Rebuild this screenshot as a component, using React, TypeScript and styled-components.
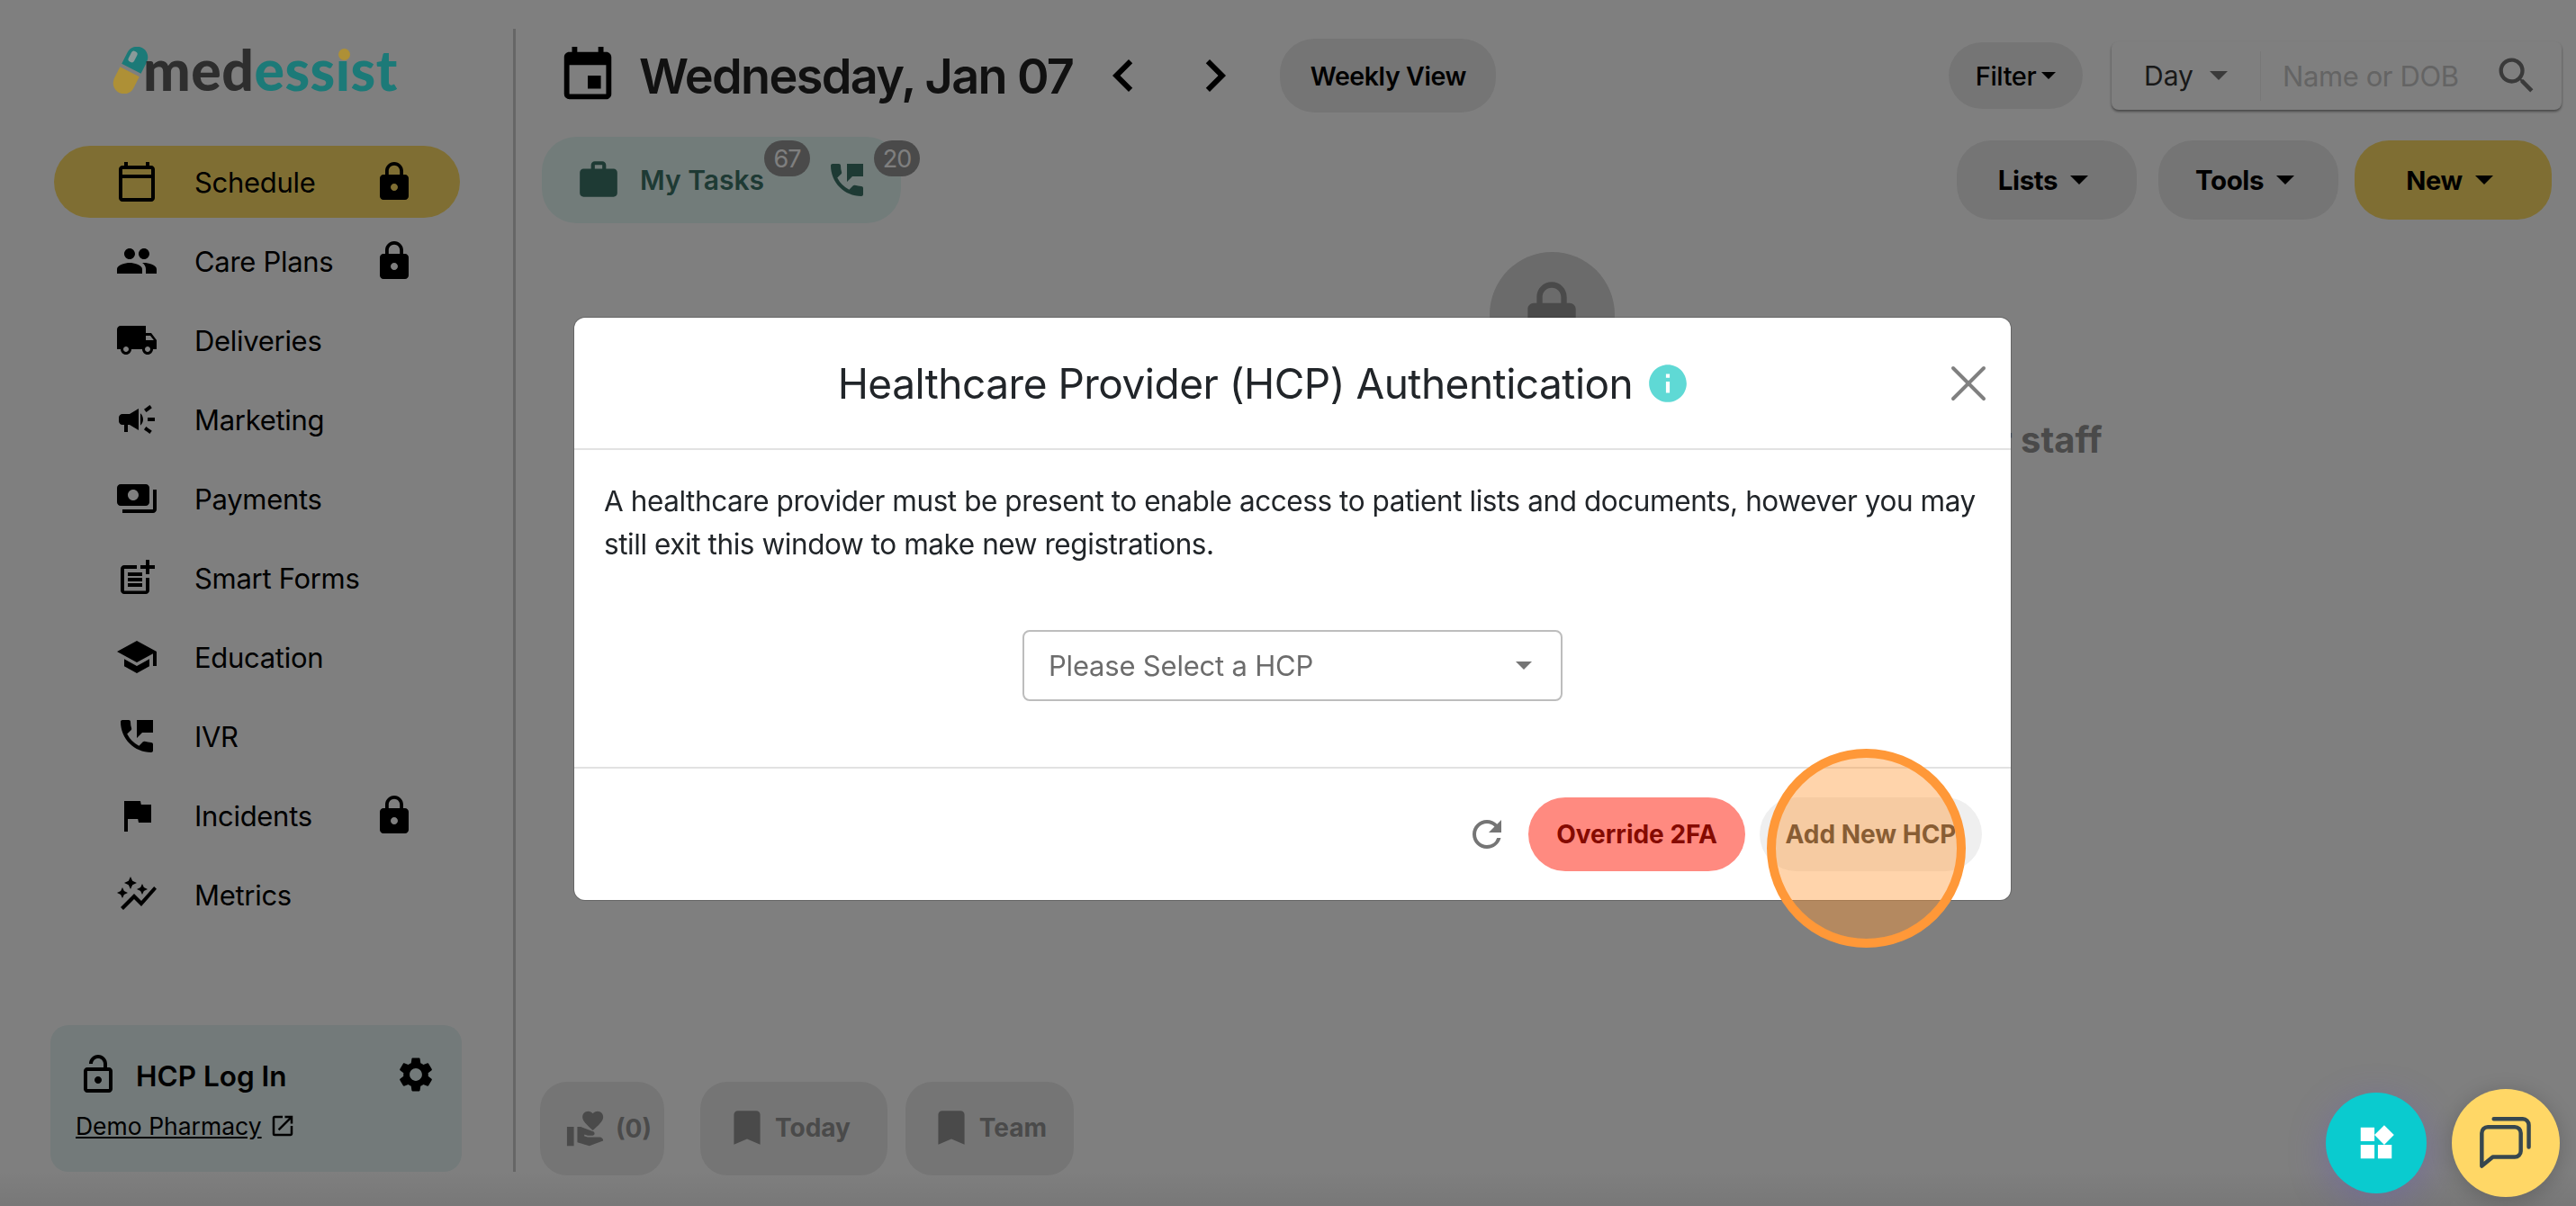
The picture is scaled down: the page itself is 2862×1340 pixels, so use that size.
import React from 'react';
import styled, { createGlobalStyle } from 'styled-components';
import { X } from 'lucide-react';
import {
  MdOutlineCalendarToday,
  MdPeople,
  MdLocalShipping,
  MdCampaign,
  MdPayments,
  MdPostAdd,
  MdSchool,
  MdPermPhoneMsg,
  MdFlag,
  MdAutoGraph,
  MdLock,
  MdOutlineLockOpen,
  MdSettings,
  MdOpenInNew,
  MdEvent,
  MdChevronLeft,
  MdChevronRight,
  MdWork,
  MdSearch,
  MdVolunteerActivism,
  MdBookmark,
  MdInfo,
  MdRefresh,
  MdWidgets,
} from 'react-icons/md';

const GlobalStyle = createGlobalStyle`
  html, body {
    margin: 0;
    height: 100%;
    background: #fff;
    font-family: Inter, "Liberation Sans", sans-serif;
  }
  * { box-sizing: border-box; }
`;

const PageWrapper = styled.div`
  display: flex;
  align-items: flex-start;
  width: 100vw;
  height: 100vh;
  overflow: hidden;
  background: linear-gradient(#fff 97%, #f0f0f0);
  color: #000;
`;

/* sidebar */
const Sidebar = styled.aside`
  display: flex;
  flex-direction: column;
  flex: none;
  width: 573px;
  height: 1270px;
  margin-top: 32px;
  padding: 18px 0 0 56px;
  border-right: 3px solid #ccc;
`;

const Logo = styled.div`
  position: relative;
  z-index: 20;
  display: flex;
  align-items: flex-end;
  height: 54px;
  margin-left: 68px;
`;

const LogoText = styled.span`
  margin-left: -7px;
  font-family: Lato, sans-serif;
  font-size: 62.5px;
  font-weight: 900;
  line-height: 54px;
  letter-spacing: 0.5px;
  color: #2e2e2e;
`;

const LogoAccent = styled.span`
  color: #1c7a78;
`;

const DottedI = styled.span`
  position: relative;
  &::before {
    content: '';
    position: absolute;
    top: 15px;
    left: 3px;
    width: 13px;
    height: 13px;
    border-radius: 50%;
    background: #ae9036;
  }
`;

const Nav = styled.nav`
  display: flex;
  flex-direction: column;
  gap: 8px;
  width: 451px;
  margin: 58px 0 0 4px;
`;

const NavRow = styled.div<{ $active?: boolean }>`
  display: flex;
  align-items: center;
  height: 80px;
  padding: 0 49px 0 68px;
  border-radius: 40px;
  background: ${(p) => (p.$active ? '#ffdd66' : 'transparent')};
  font-size: 31px;
  letter-spacing: -0.3px;
`;

const NavIcon = styled.span`
  display: flex;
  justify-content: center;
  flex: none;
  width: 48px;
  margin-right: 40px;
`;

const NavLabel = styled.span`
  flex: 1;
`;

const HcpCard = styled.div`
  display: flex;
  flex-direction: column;
  width: 457px;
  height: 163px;
  margin-top: auto;
  padding: 31px 28px 0 28px;
  border-radius: 20px;
  background: #e6f4f4;
`;

const HcpTop = styled.div`
  display: flex;
  align-items: center;
  padding-left: 1px;
  font-size: 31.5px;
  font-weight: 600;
`;

const HcpTitle = styled.span`
  flex: 1;
  margin: 3px 0 0 18px;
`;

const PharmacyLink = styled.div`
  display: flex;
  align-items: center;
  gap: 8px;
  margin-top: 17px;
  font-size: 26.5px;
`;

const Underlined = styled.span`
  text-decoration: underline;
`;

/* main column */
const Main = styled.main`
  display: flex;
  flex-direction: column;
  flex: 1;
  height: 100vh;
  padding: 43px 16px 34px 29px;
`;

const TopRow = styled.div`
  display: flex;
  align-items: center;
  height: 82px;
`;

const DateIcon = styled.span`
  display: flex;
  margin: 0 22px 0 16px;
`;

const DateTitle = styled.h1`
  margin: 0 20px 0 0;
  font-size: 54px;
  font-weight: 600;
  letter-spacing: -1.65px;
  color: #222;
  white-space: nowrap;
`;

const Chevrons = styled.div`
  display: flex;
  gap: 30px;
  margin-right: 36px;
`;

const GrayButton = styled.button<{
  $w: number;
  $h: number;
  $gold?: boolean;
  $weight?: number;
  $gap?: number;
  $size?: number;
}>`
  display: flex;
  align-items: center;
  justify-content: center;
  gap: ${(p) => p.$gap ?? 14}px;
  flex: none;
  width: ${(p) => p.$w}px;
  height: ${(p) => p.$h}px;
  padding: 0;
  border: 0;
  border-radius: 38px;
  background: ${(p) => (p.$gold ? '#ffdd66' : '#ebebeb')};
  color: #000;
  font-family: inherit;
  font-size: ${(p) => p.$size ?? 29}px;
  font-weight: ${(p) => p.$weight ?? 700};
  letter-spacing: -0.4px;
`;

const Caret = styled.span<{ $size?: number; $color?: string }>`
  width: 0;
  height: 0;
  border-left: ${(p) => p.$size ?? 10}px solid transparent;
  border-right: ${(p) => p.$size ?? 10}px solid transparent;
  border-top: ${(p) => p.$size ?? 10}px solid ${(p) => p.$color ?? '#000'};
`;

const RightTools = styled.div`
  display: flex;
  align-items: center;
  gap: 32px;
  margin-left: auto;
`;

const SearchBox = styled.div`
  display: flex;
  align-items: center;
  width: 500px;
  height: 76px;
  border-radius: 8px;
  box-shadow: 0 2px 3px rgba(0, 0, 0, 0.45);
`;

const DayPicker = styled.div`
  display: flex;
  align-items: center;
  gap: 18px;
  height: 55px;
  padding: 0 36px;
  border-right: 1px solid #eee;
  font-size: 30px;
  color: #333;
`;

const SearchHint = styled.span`
  flex: 1;
  padding-left: 24px;
  font-size: 31px;
  letter-spacing: -0.4px;
  color: #c8c8c8;
`;

const SearchIcon = styled.span`
  display: flex;
  margin-right: 24px;
  color: #757575;
`;

const SecondRow = styled.div`
  display: flex;
  align-items: center;
  height: 96px;
  margin-top: 27px;
`;

const TasksPill = styled.div`
  display: flex;
  align-items: center;
  width: 399px;
  height: 96px;
  padding-left: 38px;
  border-radius: 38px;
  background: #e5f8f5;
  color: #3c7468;
  font-size: 30px;
  font-weight: 600;
`;

const TaskItem = styled.span`
  position: relative;
  display: flex;
  align-items: center;
`;

const TaskLabel = styled.span`
  margin-left: 21px;
`;

const CallIcon = styled.span`
  display: flex;
  margin-left: 68px;
`;

const CountBadge = styled.span<{ $right: number }>`
  position: absolute;
  top: calc(50% - 44px);
  right: ${(p) => p.$right}px;
  display: flex;
  align-items: center;
  justify-content: center;
  width: 51px;
  height: 40px;
  border-radius: 20px;
  background: #949494;
  color: #fff;
  font-size: 27px;
  font-weight: 400;
  letter-spacing: -1px;
`;

const ActionButtons = styled.div`
  display: flex;
  gap: 18px;
  margin: 0 11px 0 auto;
  & > :first-child {
    margin-right: 6px;
  }
  & > button {
    padding-right: 8px;
  }
`;

const LockedMessage = styled.div`
  display: flex;
  flex-direction: column;
  align-items: center;
  margin-top: 32px;
`;

const LockCircle = styled.div`
  display: flex;
  align-items: center;
  justify-content: center;
  width: 139px;
  height: 139px;
  border-radius: 50%;
  background: #d6d6d6;
  color: #949494;
`;

const LockedText = styled.p`
  margin: 45px 0 0;
  font-size: 40px;
  font-weight: 700;
  color: #949494;
  white-space: nowrap;
`;

const BottomBar = styled.div`
  display: flex;
  gap: 20px;
  margin-top: auto;
  margin-left: -2px;
`;

const QuickButton = styled.div<{ $w: number; $first?: boolean; $pr?: number }>`
  display: flex;
  align-items: center;
  justify-content: ${(p) => (p.$first ? 'flex-start' : 'center')};
  gap: ${(p) => (p.$first ? 10 : 6)}px;
  width: ${(p) => p.$w}px;
  height: 104px;
  margin-right: ${(p) => (p.$first ? 20 : 0)}px;
  padding: ${(p) => (p.$first ? '0 0 0 28px' : `0 ${p.$pr ?? 4}px 2px 0`)};
  border-radius: 30px;
  background: #ebebeb;
  color: #949494;
  font-size: 28px;
  font-weight: 700;
`;

/* modal */
const Overlay = styled.div`
  position: fixed;
  inset: 0;
  z-index: 10;
  display: flex;
  justify-content: center;
  padding: 353px 0 0 10px;
  background: rgba(0, 0, 0, 0.5);
`;

const Modal = styled.div`
  position: relative;
  width: 1596px;
  height: 647px;
  border-radius: 12px;
  background: #fff;
  box-shadow: 0 0 0 1px rgba(0, 0, 0, 0.2);
`;

const ModalHeader = styled.div`
  position: relative;
  display: flex;
  align-items: center;
  justify-content: center;
  gap: 14px;
  height: 147px;
  padding-right: 63px;
  border-bottom: 2px solid #e2e2e2;
`;

const ModalTitle = styled.h2`
  margin: 0;
  font-size: 46px;
  font-weight: 400;
  letter-spacing: -0.5px;
  color: #212529;
`;

const CloseIcon = styled.span`
  position: absolute;
  top: 39px;
  right: 13px;
  display: flex;
  color: #808080;
`;

const ModalBody = styled.div`
  height: 354px;
  padding: 33px 33px 0;
  border-bottom: 2px solid #e2e2e2;
`;

const BodyText = styled.p`
  margin: 0;
  font-size: 31.5px;
  line-height: 48px;
  letter-spacing: -0.43px;
  color: #212529;
`;

const HcpSelect = styled.div`
  display: flex;
  align-items: center;
  justify-content: space-between;
  width: 600px;
  height: 79px;
  margin: 71px auto 0;
  padding: 0 32px 0 27px;
  border: 2px solid #bdbdbd;
  border-radius: 8px;
  font-size: 31px;
  letter-spacing: -0.2px;
  color: #6c6c6c;
`;

const ModalFooter = styled.div`
  display: flex;
  align-items: center;
  justify-content: flex-end;
  gap: 16px;
  height: 144px;
  padding: 2px 32px 0 0;
`;

const RefreshIcon = styled.span`
  display: flex;
  margin-right: 6px;
  color: #757575;
`;

const FooterButton = styled.button<{ $danger?: boolean; $w: number }>`
  width: ${(p) => p.$w}px;
  height: 82px;
  padding: 0;
  border: 0;
  border-radius: 41px;
  background: ${(p) => (p.$danger ? '#ff8a80' : '#efefef')};
  color: ${(p) => (p.$danger ? '#850a00' : '#333')};
  font-family: inherit;
  font-size: 28px;
  font-weight: 700;
`;

const Highlight = styled.div`
  position: absolute;
  left: 1325px;
  top: 479px;
  width: 221px;
  height: 221px;
  border: 10px solid #ff9838;
  border-radius: 50%;
  background: rgba(255, 152, 56, 0.42);
  pointer-events: none;
`;

/* floating buttons */
const Floating = styled.div`
  position: fixed;
  right: 18px;
  bottom: 10px;
  z-index: 20;
  display: flex;
  align-items: center;
  gap: 28px;
`;

const RoundButton = styled.div<{ $size: number; $bg: string; $glow?: boolean }>`
  display: flex;
  align-items: center;
  justify-content: center;
  width: ${(p) => p.$size}px;
  height: ${(p) => p.$size}px;
  border-radius: 50%;
  background: ${(p) => p.$bg};
  color: #fff;
  box-shadow: ${(p) =>
    p.$glow ? '0 10px 40px rgba(100, 80, 200, 0.35)' : '0 4px 24px rgba(0, 0, 0, 0.2)'};
`;

const PillMark = () => (
  <svg width="42" height="52" viewBox="0 0 42 52">
    <g transform="rotate(27 21 26)">
      <path d="M9 24V10a12 12 0 0 1 24 0V24z" fill="#1c7a78" />
      <path d="M9 28V42a12 12 0 0 0 24 0V28z" fill="#ae9036" />
      <rect x="13" y="5" width="7" height="13" rx="3" fill="#8a9a9a" />
    </g>
  </svg>
);

const ChatIcon = () => (
  <svg width="60" height="60" viewBox="0 0 54 54" fill="none" stroke="#37474f" strokeWidth="4" strokeLinecap="round" strokeLinejoin="round">
    <path d="M9 11h27a6 6 0 0 1 6 6v18a6 6 0 0 1-6 6H14L3 50V17a6 6 0 0 1 6-6z" />
    <path d="M15 3h29a6 6 0 0 1 6 6v22" />
  </svg>
);

const navItems: { label: string; icon: React.ReactNode; locked?: boolean }[] = [
  { label: 'Schedule', icon: <MdOutlineCalendarToday size={52} />, locked: true },
  { label: 'Care Plans', icon: <MdPeople size={50} />, locked: true },
  { label: 'Deliveries', icon: <MdLocalShipping size={50} /> },
  { label: 'Marketing', icon: <MdCampaign size={50} /> },
  { label: 'Payments', icon: <MdPayments size={50} /> },
  { label: 'Smart Forms', icon: <MdPostAdd size={50} /> },
  { label: 'Education', icon: <MdSchool size={50} /> },
  { label: 'IVR', icon: <MdPermPhoneMsg size={50} /> },
  { label: 'Incidents', icon: <MdFlag size={50} />, locked: true },
  { label: 'Metrics', icon: <MdAutoGraph size={50} /> },
];

const App: React.FC = () => {
  return (
    <PageWrapper>
      <GlobalStyle />
      <Sidebar>
        <Logo>
          <PillMark />
          <LogoText>
            med
            <LogoAccent>
              ess<DottedI>ı</DottedI>st
            </LogoAccent>
          </LogoText>
        </Logo>
        <Nav>
          {navItems.map((item, i) => (
            <NavRow key={item.label} $active={i === 0}>
              <NavIcon>{item.icon}</NavIcon>
              <NavLabel>{item.label}</NavLabel>
              {item.locked && <MdLock size={48} />}
            </NavRow>
          ))}
        </Nav>
        <HcpCard>
          <HcpTop>
            <MdOutlineLockOpen size={48} />
            <HcpTitle>HCP Log In</HcpTitle>
            <MdSettings size={46} />
          </HcpTop>
          <PharmacyLink>
            <Underlined>Demo Pharmacy</Underlined>
            <MdOpenInNew size={30} />
          </PharmacyLink>
        </HcpCard>
      </Sidebar>

      <Main>
        <TopRow>
          <DateIcon>
            <MdEvent size={70} />
          </DateIcon>
          <DateTitle>Wednesday, Jan 07</DateTitle>
          <Chevrons>
            <MdChevronLeft size={72} />
            <MdChevronRight size={72} />
          </Chevrons>
          <GrayButton $w={240} $h={82} $weight={600} $size={28.5}>Weekly View</GrayButton>
          <RightTools>
            <GrayButton $w={149} $h={74} $weight={500} $gap={6}>
              Filter
              <Caret $size={8} />
            </GrayButton>
            <SearchBox>
              <DayPicker>
                Day
                <Caret $color="#757575" />
              </DayPicker>
              <SearchHint>Name or DOB</SearchHint>
              <SearchIcon>
                <MdSearch size={52} />
              </SearchIcon>
            </SearchBox>
          </RightTools>
        </TopRow>

        <SecondRow>
          <TasksPill>
            <TaskItem>
              <MdWork size={50} />
              <TaskLabel>My Tasks</TaskLabel>
              <CountBadge $right={-51}>67</CountBadge>
            </TaskItem>
            <TaskItem>
              <CallIcon>
                <MdPermPhoneMsg size={48} />
              </CallIcon>
              <CountBadge $right={-57}>20</CountBadge>
            </TaskItem>
          </TasksPill>
          <ActionButtons>
            <GrayButton $w={200} $h={88} $size={29.5}>
              Lists
              <Caret />
            </GrayButton>
            <GrayButton $w={200} $h={88} $size={29.5}>
              Tools
              <Caret />
            </GrayButton>
            <GrayButton $w={219} $h={88} $gold>
              New
              <Caret />
            </GrayButton>
          </ActionButtons>
        </SecondRow>

        <LockedMessage>
          <LockCircle>
            <MdLock size={80} />
          </LockCircle>
          <LockedText>A healthcare provider must log in to view the schedule for staff</LockedText>
        </LockedMessage>

        <BottomBar>
          <QuickButton $w={138} $first>
            <MdVolunteerActivism size={46} />
            (0)
          </QuickButton>
          <QuickButton $w={208} $pr={14}>
            <MdBookmark size={50} />
            Today
          </QuickButton>
          <QuickButton $w={187}>
            <MdBookmark size={50} />
            Team
          </QuickButton>
        </BottomBar>
      </Main>

      <Overlay>
        <Modal>
          <ModalHeader>
            <ModalTitle>Healthcare Provider (HCP) Authentication</ModalTitle>
            <MdInfo size={50} color="#5fd9d5" />
            <CloseIcon>
              <X size={68} strokeWidth={1.4} />
            </CloseIcon>
          </ModalHeader>
          <ModalBody>
            <BodyText>
              A healthcare provider must be present to enable access to patient lists and documents,
              however you may still exit this window to make new registrations.
            </BodyText>
            <HcpSelect>
              Please Select a HCP
              <Caret $size={9} $color="#757575" />
            </HcpSelect>
          </ModalBody>
          <ModalFooter>
            <RefreshIcon>
              <MdRefresh size={48} />
            </RefreshIcon>
            <FooterButton $danger $w={241}>Override 2FA</FooterButton>
            <FooterButton $w={247}>Add New HCP</FooterButton>
          </ModalFooter>
          <Highlight />
        </Modal>
      </Overlay>

      <Floating>
        <RoundButton $size={112} $bg="#0acbcf" $glow>
          <MdWidgets size={46} />
        </RoundButton>
        <RoundButton $size={120} $bg="#ffd766">
          <ChatIcon />
        </RoundButton>
      </Floating>
    </PageWrapper>
  );
};

export default App;
